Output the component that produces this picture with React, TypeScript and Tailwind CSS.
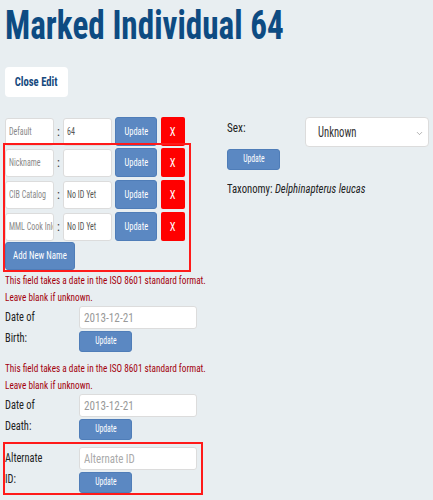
import { ChevronDown } from 'lucide-react'
import type { ReactNode } from 'react'

const font = "font-['Roboto_Condensed','Liberation_Sans_Narrow','DejaVu_Sans_Condensed',Roboto,sans-serif]"

// the reference face is narrower than Roboto Condensed, so squeeze the glyphs
const Narrow = ({ children, className = '' }: { children: ReactNode; className?: string }) => (
  <span className={`inline-block whitespace-nowrap ${className}`}>{children}</span>
)

const UpdateButton = ({ className = '', big = false }: { className?: string; big?: boolean }) => (
  <button
    className={`bg-[#5b88c2] border border-[#4f7db8] text-white rounded-[3px] flex items-center justify-center ${big ? 'text-[11.7px]' : 'text-[10.7px]'} ${className}`}
  >
    <Narrow className="scale-x-[0.72]">Update</Narrow>
  </button>
)

const Box = ({ text, muted = false }: { text: string; muted?: boolean }) => (
  <div className="w-[49px] h-[28px] bg-white border border-[#dcdcdc] rounded-[3px] pl-[3px] flex items-center overflow-hidden">
    <Narrow className={`origin-left scale-x-[0.76] text-[10.5px] ${muted ? 'text-[#888]' : 'text-[#555]'}`}>{text}</Narrow>
  </div>
)

const NameRow = ({ label, value }: { label: string; value: string }) => (
  <div className="flex items-center h-[29px]">
    <Box text={label} muted />
    <span className="w-[9px] text-center text-[12px] text-[#333]">:</span>
    <Box text={value} />
    <UpdateButton big className="ml-[3px] w-[42px] h-[29px]" />
    <button className="ml-[4px] w-[24px] h-[29px] bg-[#ff0000] text-white text-[13px] rounded-[2px]">
      <Narrow className="scale-x-[0.8]">X</Narrow>
    </button>
  </div>
)

const DateHint = ({ className = '' }: { className?: string }) => (
  <div className={`text-[10.5px] leading-[17px] text-[#a3000c] ${className}`}>
    <div>
      <Narrow className="origin-left scale-x-[0.88]">This field takes a date in the ISO 8601 standard format.</Narrow>
    </div>
    <div>
      <Narrow className="origin-left scale-x-[0.88]">Leave blank if unknown.</Narrow>
    </div>
  </div>
)

const FieldBlock = ({ first, second, value, placeholder }: { first: string; second: string; value?: string; placeholder?: string }) => (
  <div className="flex">
    <div className="w-[74px] text-[13.5px] leading-[21px] text-[#222]">
      <div>
        <Narrow className="origin-left scale-x-[0.77]">{first}</Narrow>
      </div>
      <div>
        <Narrow className="origin-left scale-x-[0.77]">{second}</Narrow>
      </div>
    </div>
    <div className="flex flex-col gap-[2px]">
      <div className="w-[118px] h-[23px] bg-white border border-[#dcdcdc] rounded-[3px] pl-[4px] flex items-center text-[13px]">
        {value ? (
          <Narrow className="origin-left scale-x-[0.86] text-[#999]">{value}</Narrow>
        ) : (
          <Narrow className="origin-left scale-x-[0.84] text-[#aaa]">{placeholder}</Narrow>
        )}
      </div>
      <UpdateButton className="w-[53px] h-[21px]" />
    </div>
  </div>
)

export default function App() {
  return (
    <div className={`w-[433px] h-[500px] overflow-hidden bg-[#e8eef1] pl-[5px] ${font}`}>
      <h1 className="pt-[2px] text-[41px] leading-[46px] font-bold text-[#0d4b82]">
        <Narrow className="origin-left scale-x-[0.81]">Marked Individual 64</Narrow>
      </h1>
      <button className="mt-[19px] w-[63px] h-[30px] bg-white rounded-[4px] text-[13px] font-bold text-[#164a7e]">
        <Narrow className="scale-x-[0.82]">Close Edit</Narrow>
      </button>

      <div className="flex mt-[20px]">
        <div className="w-[222px]">
          <NameRow label="Default" value="64" />
          <div className="relative -mt-[3px] -ml-[2px] w-[188px] border-2 border-[#ff1a1a] pt-[3px]">
            <div className="flex flex-col gap-[3px]">
              <NameRow label="Nickname" value="" />
              <NameRow label="CIB Catalog" value="No ID Yet" />
              <NameRow label="MML Cook Inlet" value="No ID Yet" />
            </div>
            <button className="mt-[1px] w-[70px] h-[28px] bg-[#5b88c2] border border-[#4f7db8] text-white text-[10.5px] rounded-[3px]">
              <Narrow className="scale-x-[0.84]">Add New Name</Narrow>
            </button>
          </div>

          <DateHint />
          <FieldBlock first="Date of" second="Birth:" value="2013-12-21" />
          <DateHint className="mt-[8px]" />
          <FieldBlock first="Date of" second="Death:" value="2013-12-21" />
          <div className="relative mt-[2px] -ml-[2px] w-[200px] border-2 border-[#ff1a1a] pt-[3px]">
            <FieldBlock first="Alternate" second="ID:" placeholder="Alternate ID" />
          </div>
        </div>

        <div className="flex-1 pr-[4px]">
          <div className="flex items-center h-[30px]">
            <span className="w-[78px] text-[13px] text-[#222] -mt-[8px]">
              <Narrow className="origin-left scale-x-[0.86]">Sex:</Narrow>
            </span>
            <div className="relative flex-1 h-[30px] bg-white border border-[#dcdcdc] rounded-[4px] flex items-center pl-[12px] text-[14px] text-[#333]">
              <Narrow className="origin-left scale-x-[0.76]">Unknown</Narrow>
              <ChevronDown size={9} strokeWidth={1.5} className="absolute right-[4px] top-[11px] text-[#777]" />
            </div>
          </div>
          <UpdateButton className="mt-[2px] w-[53px] h-[21px]" />
          <div className="mt-[9px] text-[12.7px] text-[#222]">
            <Narrow className="origin-left scale-x-[0.84]">
              Taxonomy: <i>Delphinapterus leucas</i>
            </Narrow>
          </div>
        </div>
      </div>
    </div>
  )
}
